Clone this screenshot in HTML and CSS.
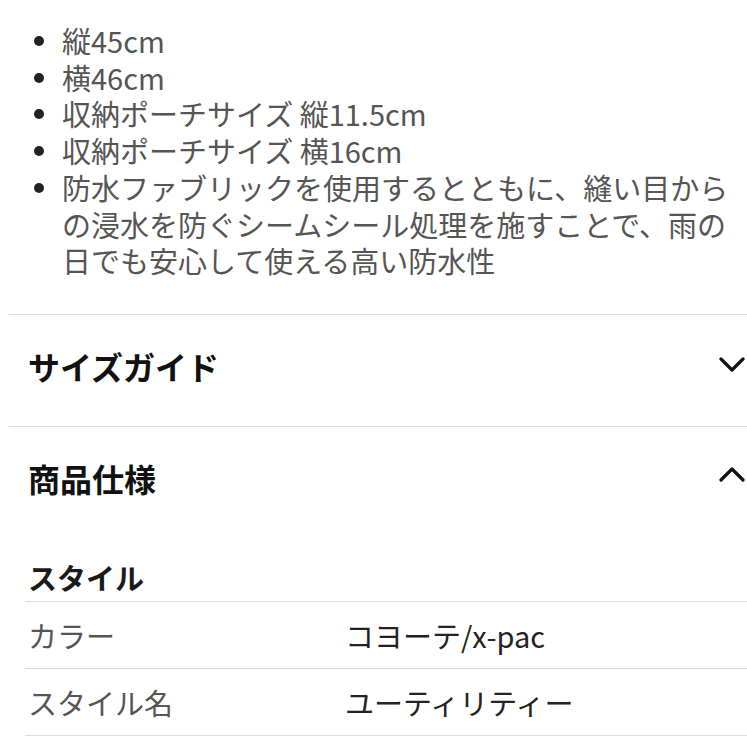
FILE: index.html
```html
<!DOCTYPE html>
<html lang="ja">
<head>
<meta charset="utf-8">
<title>商品詳細</title>
<link rel="stylesheet" href="styles.css">
</head>
<body>
<main class="page">
  <ul class="features">
    <li><span>縦45cm</span></li>
    <li><span>横46cm</span></li>
    <li><span>収納ポーチサイズ 縦11.5cm</span></li>
    <li><span>収納ポーチサイズ 横16cm</span></li>
    <li><span>防水ファブリックを使用するとともに、縫い目からの浸水を防ぐシームシール処理を施すことで、雨の日でも安心して使える高い防水性</span></li>
  </ul>

  <section class="acc">
    <div class="acc-head">
      <h2 class="acc-title">サイズガイド</h2>
      <svg class="chev" width="26" height="16" viewBox="0 0 26 16"><polyline points="2,2 13,13 24,2" fill="none" stroke="#111" stroke-width="3.2" stroke-linecap="round" stroke-linejoin="round"/></svg>
    </div>
  </section>

  <section class="acc">
    <div class="acc-head">
      <h2 class="acc-title">商品仕様</h2>
      <svg class="chev chev-up" width="26" height="16" viewBox="0 0 26 16"><polyline points="2,14 13,3 24,14" fill="none" stroke="#111" stroke-width="3.2" stroke-linecap="round" stroke-linejoin="round"/></svg>
    </div>
    <div class="spec">
      <h3 class="spec-title">スタイル</h3>
      <div class="spec-row"><span class="spec-label">カラー</span><span class="spec-value">コヨーテ/x-pac</span></div>
      <div class="spec-row"><span class="spec-label">スタイル名</span><span class="spec-value">ユーティリティー</span></div>
    </div>
  </section>
</main>
</body>
</html>
```

FILE: styles.css
```css
html, body {
  margin: 0;
  padding: 0;
  background: #ffffff;
}

body {
  font-family: "Noto Sans CJK JP", "Noto Sans", sans-serif;
  color: #222;
}

.page {
  width: 747px;
  overflow: hidden;
}

.features {
  list-style: none;
  margin: 0 0 35px 0;
  padding: 22px 0 0 0;
}

.features li {
  display: flex;
  font-size: 29px;
  line-height: 36.7px;
  color: #555;
}

.features li::before {
  content: "";
  flex: 0 0 auto;
  width: 10px;
  height: 10px;
  border-radius: 50%;
  background: #222;
  margin: 14px 18px 0 34px;
}

.acc {
  margin-left: 9px;
  border-top: 1px solid #dedede;
}

.acc-head {
  display: flex;
  align-items: center;
  justify-content: space-between;
  padding: 31px 2px 40px 19px;
}

.acc-title {
  margin: 0;
  font-size: 32px;
  line-height: 40px;
  font-weight: 600;
  color: #111;
}

.chev {
  display: block;
  margin-top: -2px;
}

.chev-up {
  margin-top: -8px;
}

.spec {
  margin-left: 16px;
  margin-top: 21px;
}

.spec-title {
  margin: 0;
  padding: 0 0 6px 3px;
  font-size: 29px;
  line-height: 36px;
  font-weight: 600;
  color: #1a1a1a;
  border-bottom: 1px solid #dcdcdc;
}

.spec-row {
  display: grid;
  grid-template-columns: 320px 1fr;
  align-items: center;
  height: 66px;
  border-bottom: 1px solid #dcdcdc;
  font-size: 29px;
  line-height: 36px;
}

.spec-label {
  padding-left: 3px;
  color: #555;
}

.spec-value {
  color: #222;
}
```
